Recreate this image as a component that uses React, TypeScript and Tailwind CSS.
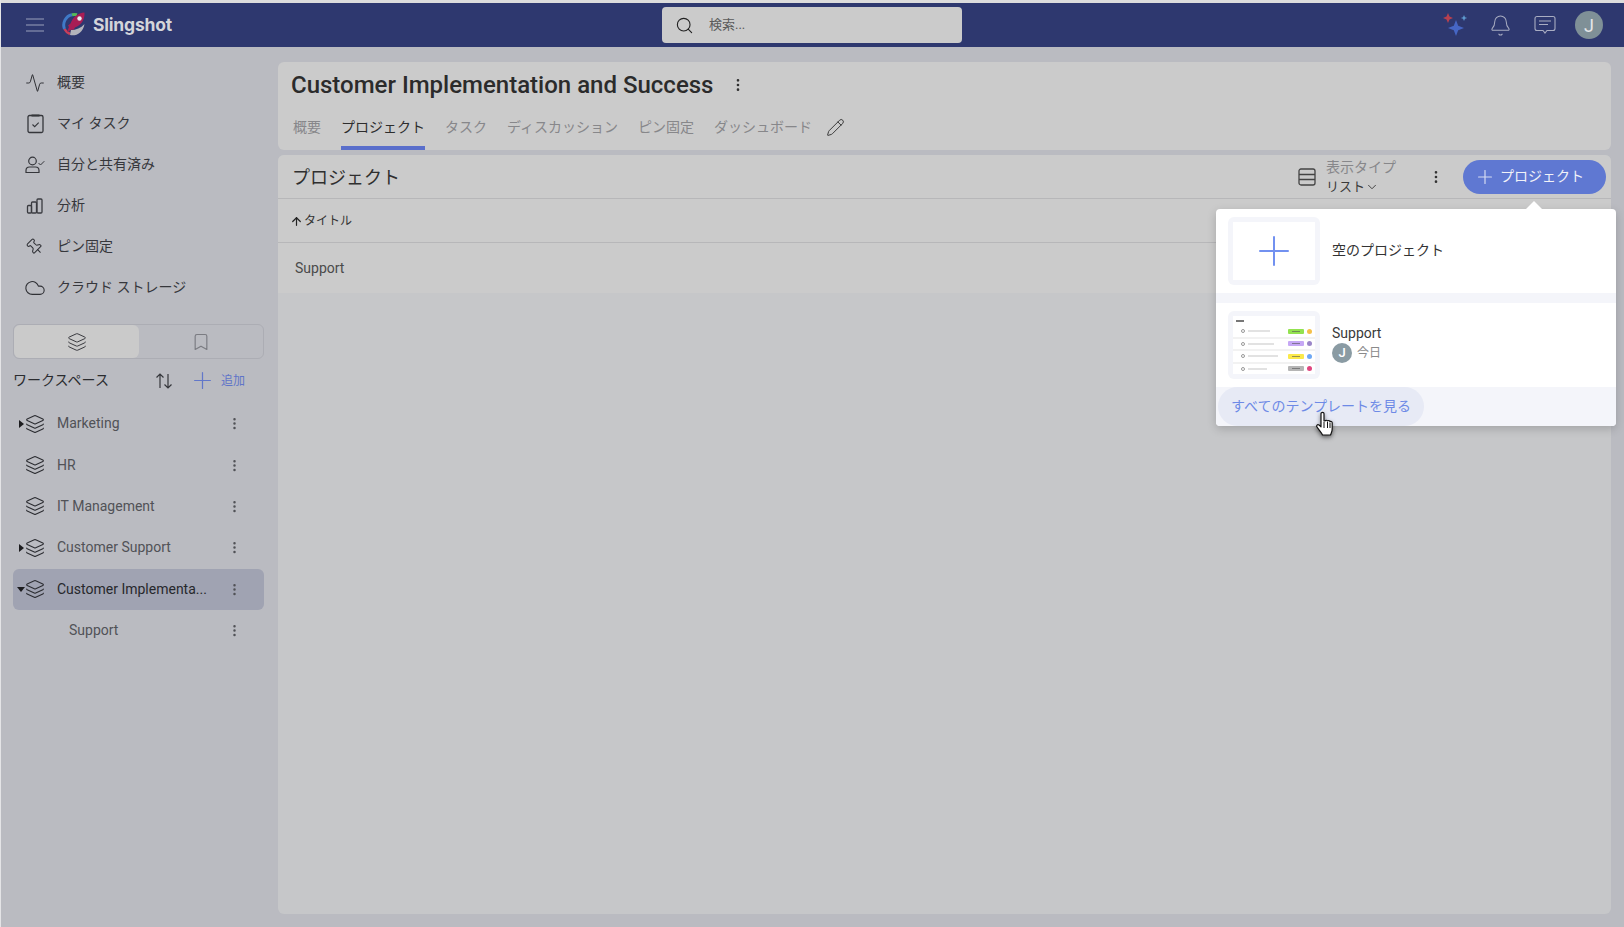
import React from "react";
import { Activity, Cloud, Layers, Bookmark, Plus, ArrowUp, Pencil, Search, Bell, MoreVertical, ChevronDown, Pin } from "lucide-react";

const font = "font-['Roboto','Noto_Sans_CJK_JP',sans-serif]";

function Bars() {
  return (
    <svg width="18" height="16" viewBox="0 0 18 16" fill="none" stroke="#3a3b40" strokeWidth="1.3">
      <rect x="1.5" y="7.5" width="4" height="7.5" rx="1" />
      <rect x="5.500" y="4" width="5" height="11" rx="1" />
      <rect x="11" y="1" width="5" height="14" rx="1" />
    </svg>
  );
}

function Clipboard() {
  return (
    <svg width="17" height="20" viewBox="0 0 17 20" fill="none" stroke="#35363b" strokeWidth="1.3">
      <rect x="1" y="1.500" width="15" height="17" rx="1.500" />
      <path d="M4.500 1.500h8" strokeWidth="2" />
      <path d="M5.500 10.500l2.200 2.200 4-4" strokeWidth="1.1" />
    </svg>
  );
}

function UserTick() {
  return (
    <svg width="20" height="18" viewBox="0 0 20 18" fill="none" stroke="#35363b" strokeWidth="1.200">
      <circle cx="7.500" cy="5" r="3.800" />
      <path d="M1 16.500v-2a3.500 3.500 0 0 1 3.500-3.500h6a3.500 3.500 0 0 1 3.500 3.500v2z" />
      <path d="M13.500 7l2 2 3.800-3.800" strokeWidth="1" />
    </svg>
  );
}

function Logo() {
  return (
    <svg width="24" height="24" viewBox="0 0 24 24" fill="none">
      <path d="M2.500 17 A10.500 10.500 0 0 1 10 2.800" stroke="#3f79c7" strokeWidth="3" />
      <path d="M10 2.800 A10.500 10.500 0 0 1 15 2.800" stroke="#55b95a" strokeWidth="3" />
      <path d="M2.500 17 A10.500 10.500 0 0 0 8 22" stroke="#c8405a" strokeWidth="2.500" />
      <path d="M8 23 C 14 24.500 21 21 22.500 12 C 19 16 14 18 9 18 Z" fill="#b3b4bb" />
      <path d="M22.500 0.500 C 16 1 11 5 8.500 11.500 L6 13.500 L7 15 L5 20 L10 17.500 L11.500 18 L13 15.500 C 19 13 23 8 22.500 0.500 Z" fill="#a81d55" />
      <circle cx="17.500" cy="6.500" r="2.200" fill="#ececf0" />
    </svg>
  );
}

function SideItem({ icon, label }: { icon: React.ReactNode; label: string }) {
  return (
    <div className="flex h-[41px] items-center">
      <div className="flex w-[44px] shrink-0 justify-center">{icon}</div>
      <span className="text-[14px] text-[#36373c]">{label}</span>
    </div>
  );
}

function Workspace({ label, caret, selected, indent }: { label: string; caret?: "r" | "d"; selected?: boolean; indent?: boolean }) {
  return (
    <div className={`flex h-[41.4px] items-center rounded-[6px] ${selected ? "bg-[#a0a3b2]" : ""}`}>
      <div className="flex w-[16px] shrink-0 justify-center">
        {caret === "r" && <div className="h-0 w-0 border-y-[4px] border-l-[5px] border-y-transparent border-l-[#1c1c1f]" />}
        {caret === "d" && <div className="h-0 w-0 border-x-[4px] border-t-[5px] border-x-transparent border-t-[#1c1c1f]" />}
      </div>
      <div className="flex w-[12px] shrink-0 justify-center">
        {!indent && <Layers size={20} strokeWidth={1.3} className="shrink-0 text-[#2c2d32]" />}
      </div>
      <span className={`${indent ? "ml-[28px] w-[138px]" : "ml-[16px] w-[150px]"} shrink-0 truncate text-[14px] ${selected ? "text-[#27282c]" : "text-[#515257]"}`}>{label}</span>
      <MoreVertical size={15} strokeWidth={2} className="ml-[20px] shrink-0 text-[#505156]" />
    </div>
  );
}

function Thumb() {
  const rows = [
    ["w-[22px]", "bg-[#93e24f]", "bg-[#f5c04a]"],
    ["w-[26px]", "bg-[#c6a8f5]", "bg-[#9b86c9]"],
    ["w-[30px]", "bg-[#fbe94a]", "bg-[#6ea8f5]"],
    ["w-[19px]", "bg-[#b5b5b5]", "bg-[#e0457f]"],
  ];
  return (
    <div className="flex h-[68px] w-[92px] shrink-0 flex-col rounded-[6px] bg-[#f4f5fa] p-[5px]">
      <div className="flex h-[58px] flex-col bg-white">
        <div className="flex h-[10px] shrink-0 items-center pl-[3px]">
          <div className="h-[2px] w-[8px] bg-[#777]" />
        </div>
        <div className="flex flex-1 flex-col gap-[2px] bg-[#f2f2f2]">
          {rows.map((r, i) => (
            <div key={i} className="flex flex-1 items-center bg-white pl-[8px] pr-[3px]">
              <div className="h-[4px] w-[4px] rounded-full border border-[#999]" />
              <div className={`ml-[3px] h-[2px] ${r[0]} bg-[#e2e2e2]`} />
              <div className="flex-1" />
              <div className={`flex h-[5px] w-[16px] items-center justify-center rounded-[1px] ${r[1]}`}>
                <div className="h-[1px] w-[8px] bg-[#555]/60" />
              </div>
              <div className={`ml-[3px] h-[5px] w-[5px] rounded-full ${r[2]}`} />
            </div>
          ))}
        </div>
      </div>
    </div>
  );
}

function HandCursor() {
  return (
    <svg width="22" height="28" viewBox="0 0 22 28" className="absolute left-[99px] top-[24px] drop-shadow-[0_2px_2px_rgba(0,0,0,0.5)]">
      <path d="M6 2.500 C6 1 9 1 9 2.500 L9 10 L10 10 C10.500 9 12 9 12.500 10 C13 9.300 14.700 9.300 15 10.500 C15.700 10 17.200 10.400 17.200 11.800 L17.200 18 C17.200 21 16 22.500 15.500 24 L7.500 24 C7 22 4 19 2 16 C1 14.500 2.500 13 4 14 L6 15.800 Z" fill="#fff" stroke="#111" strokeWidth="1.200" strokeLinejoin="round" />
      <path d="M9 11 V17 M12.500 11 V17 M15 11.500 V17" stroke="#111" strokeWidth="1" />
    </svg>
  );
}

export default function App() {
  return (
    <div className={`${font} flex h-[927px] w-[1624px] flex-col overflow-hidden border-l border-[#e4e4e6] bg-[#babbc1]`}>
      <div className="h-[3px] shrink-0 bg-[#dcdcdc]" />
      <header className="relative flex h-[44px] shrink-0 items-center bg-[#2e386f] pl-[25px] pr-[21px]">
        <svg width="18" height="14" viewBox="0 0 18 14" stroke="#9aa0bb" strokeWidth="1.200"><path d="M0 1h18M0 7h18M0 13h18" /></svg>
        <div className="ml-[18px] -translate-y-[1px]"><Logo /></div>
        <span className="ml-[7px] w-[80px] font-['Inter',sans-serif] text-[17.5px] font-bold tracking-[-0.2px] text-[#d4d5da]">Slingshot</span>
        <div className="ml-[489px] flex h-[36px] w-[300px] items-center rounded-[4px] bg-[#cbcbcb] pl-[13px]">
          <Search size={19} strokeWidth={1.4} className="text-[#222]" />
          <span className="ml-[15px] text-[13px] text-[#5a5a5a]">検索...</span>
        </div>
        <div className="flex-1" />
        <svg width="28" height="26" viewBox="0 0 28 26" className="mr-[19px]">
          <path d="M14 8 L16.200 13.800 L22 16 L16.200 18.200 L14 24 L11.800 18.200 L6 16 L11.800 13.800 Z" fill="#4666c4" />
          <path d="M6 1 L7.500 4.500 L11 6 L7.500 7.500 L6 11 L4.500 7.500 L1 6 L4.500 4.500 Z" fill="#b8404f" />
          <path d="M22 3 L23 5.200 L25.200 6 L23 6.800 L22 9 L21 6.800 L18.800 6 L21 5.200 Z" fill="#5f9bd0" />
        </svg>
        <Bell size={23} strokeWidth={1.050} className="mr-[22px] text-[#a9adc2]" />
        <svg width="22" height="20" viewBox="0 0 22 20" fill="none" stroke="#a9adc2" strokeWidth="1.100" className="mr-[19px]">
          <path d="M3 1.500h16a2 2 0 0 1 2 2v10a2 2 0 0 1-2 2h-6l-2 2.500-2-2.500H3a2 2 0 0 1-2-2v-10a2 2 0 0 1 2-2z" />
          <path d="M5 6h12M5 9.500h9" />
        </svg>
        <div className="flex h-[28px] w-[28px] items-center justify-center rounded-full bg-[#7f9097] text-[18px] text-[#e4e6e8]">J</div>
      </header>

      <div className="flex min-h-0 flex-1">
        <aside className="w-[277px] shrink-0 pl-[12px] pr-[14.5px] pt-[15px]">
          <div>
            <SideItem icon={<Activity size={20} strokeWidth={1.200} className="text-[#303136]" />} label="概要" />
            <SideItem icon={<Clipboard />} label="マイ タスク" />
            <SideItem icon={<UserTick />} label="自分と共有済み" />
            <SideItem icon={<Bars />} label="分析" />
            <SideItem icon={<Pin size={18} strokeWidth={1.400} className="-rotate-45 text-[#303136]" />} label="ピン固定" />
            <SideItem icon={<Cloud size={22} strokeWidth={1.200} className="text-[#303136]" />} label="クラウド ストレージ" />
          </div>
          <div className="mt-[16px] flex h-[35px] rounded-[6px] border border-[#acadb4]">
            <div className="flex w-[125px] items-center justify-center rounded-[6px] bg-[#cacaca]">
              <Layers size={20} strokeWidth={1.200} className="text-[#3a3b40]" />
            </div>
            <div className="flex flex-1 items-center justify-center">
              <Bookmark size={20} strokeWidth={1.400} className="text-[#7b7c82]" />
            </div>
          </div>
          <div className="mt-[5px] flex h-[33px] items-center">
            <span className="w-[141px] text-[14px] text-[#2a2b2f]">ワークスペース</span>
            <svg width="20" height="20" viewBox="0 0 20 20" fill="none" stroke="#36373c" strokeWidth="1.200"><path d="M6 17V3M2.500 6.500L6 3l3.500 3.500M14 3v14M10.500 13.500L14 17l3.500-3.500" /></svg>
            <Plus size={27} strokeWidth={1.100} className="ml-[15px] text-[#6277c9]" />
            <span className="ml-[5px] text-[12px] text-[#5f74c8]">追加</span>
          </div>
          <div className="mt-[6px]">
            <Workspace label="Marketing" caret="r" />
            <Workspace label="HR" />
            <Workspace label="IT Management" />
            <Workspace label="Customer Support" caret="r" />
            <Workspace label="Customer Implementa..." caret="d" selected />
            <Workspace label="Support" indent />
          </div>
        </aside>

        <main className="relative flex w-[1333px] shrink-0 flex-col pt-[15px]">
          <section className="h-[88px] shrink-0 rounded-[6px] bg-[#cbcbcb] pl-[13px] pt-[7px]">
            <div className="flex items-center">
              <h1 className="text-[24px] font-medium leading-[32px] text-[#2b2b2b]">Customer Implementation and Success</h1>
              <MoreVertical size={16} strokeWidth={2} className="ml-[17px] text-[#303030]" />
            </div>
            <nav className="mt-[12px] flex h-[37px] items-start text-[14px] text-[#87878a]">
              <span className="ml-[2px] mr-[20px] pt-[4px]">概要</span>
              <span className="mr-[20px] h-[37px] border-b-[4px] border-[#5a6fcb] pt-[4px] text-[#2d2d2d]">プロジェクト</span>
              <span className="mr-[20px] pt-[4px]">タスク</span>
              <span className="mr-[20px] pt-[4px]">ディスカッション</span>
              <span className="mr-[20px] pt-[4px]">ピン固定</span>
              <span className="mr-[14px] pt-[4px]">ダッシュボード</span>
              <Pencil size={19} strokeWidth={1.200} className="mt-[5px] text-[#333]" />
            </nav>
          </section>

          <section className="mb-[13px] mt-[5px] flex min-h-0 flex-1 flex-col rounded-[6px] bg-[#c6c7c9]">
            <div className="flex h-[44px] shrink-0 items-center rounded-t-[6px] border-b border-[#b7b7b9] bg-[#cbcbcb] pl-[14px] pr-[5px]">
              <span className="pt-[2px] text-[18px] text-[#2f2f2f]">プロジェクト</span>
              <div className="flex-1" />
              <svg width="18" height="18" viewBox="0 0 18 18" fill="none" stroke="#444" strokeWidth="1.300"><rect x="1" y="1" width="16" height="16" rx="2" /><path d="M1 6.500h16M1 11.500h16" /></svg>
              <div className="ml-[10px] flex w-[78px] flex-col text-[14px] leading-[20px]">
                <span className="text-[#87878a]">表示タイプ</span>
                <span className="flex items-center text-[13px] text-[#3a3a3a]">リスト<ChevronDown size={14} strokeWidth={1.600} /></span>
              </div>
              <MoreVertical size={16} strokeWidth={2} className="ml-[24px] text-[#333]" />
              <button className="ml-[19px] flex h-[34px] w-[143px] items-center rounded-full bg-[#5f78d2] pl-[11px] text-[14px] text-[#f1f2f8]">
                <Plus size={22} strokeWidth={1.300} className="mr-[4px] text-[#d6dcf2]" />プロジェクト
              </button>
            </div>
            <div className="flex h-[44px] shrink-0 items-center border-b border-[#b7b7b9] bg-[#cbcbcb] pl-[12px] pt-[1px] text-[12px] text-[#333]">
              <ArrowUp size={13} strokeWidth={2.200} className="mr-[1px] text-[#222]" />タイトル
            </div>
            <div className="flex h-[50px] shrink-0 items-center bg-[#cbcbcb] pl-[17px] text-[14px] text-[#4a4a4a]">Support</div>
          </section>

          <div className="absolute left-[938px] top-[162px] z-10 w-[400px] rounded-[4px] bg-white shadow-[0_3px_10px_rgba(0,0,0,0.18)]">
            <div className="absolute -top-[8px] left-[309px] h-0 w-0 border-x-[9px] border-b-[9px] border-x-transparent border-b-white" />
            <div className="flex h-[84px] items-center pl-[12px]">
              <div className="flex h-[68px] w-[92px] items-center justify-center rounded-[6px] bg-[#f4f5fa] p-[5px]">
                <div className="flex h-full w-full items-center justify-center bg-white">
                  <Plus size={48} strokeWidth={1} className="text-[#7291f0]" />
                </div>
              </div>
              <span className="mb-[2px] ml-[12px] text-[14px] text-[#333]">空のプロジェクト</span>
            </div>
            <div className="h-[10px] bg-[#f4f5fa]" />
            <div className="flex h-[84px] items-center pl-[12px]">
              <Thumb />
              <div className="mb-[4px] ml-[12px] flex flex-col">
                <span className="text-[14px] leading-[19px] text-[#3a3a3a]">Support</span>
                <div className="flex items-center">
                  <div className="flex h-[20px] w-[20px] items-center justify-center rounded-full bg-[#8a9ba3] text-[13px] font-medium text-white">J</div>
                  <span className="ml-[5px] text-[12px] text-[#8a8a8a]">今日</span>
                </div>
              </div>
            </div>
            <div className="relative h-[39px] rounded-b-[4px] bg-[#f4f5fa] pl-[2px]">
              <div className="flex h-[39px] w-[206px] items-center justify-center rounded-full bg-[#e7eaf5] text-[14px] text-[#6e8ae6]">すべてのテンプレートを見る</div>
              <HandCursor />
            </div>
          </div>
        </main>
      </div>
    </div>
  );
}
